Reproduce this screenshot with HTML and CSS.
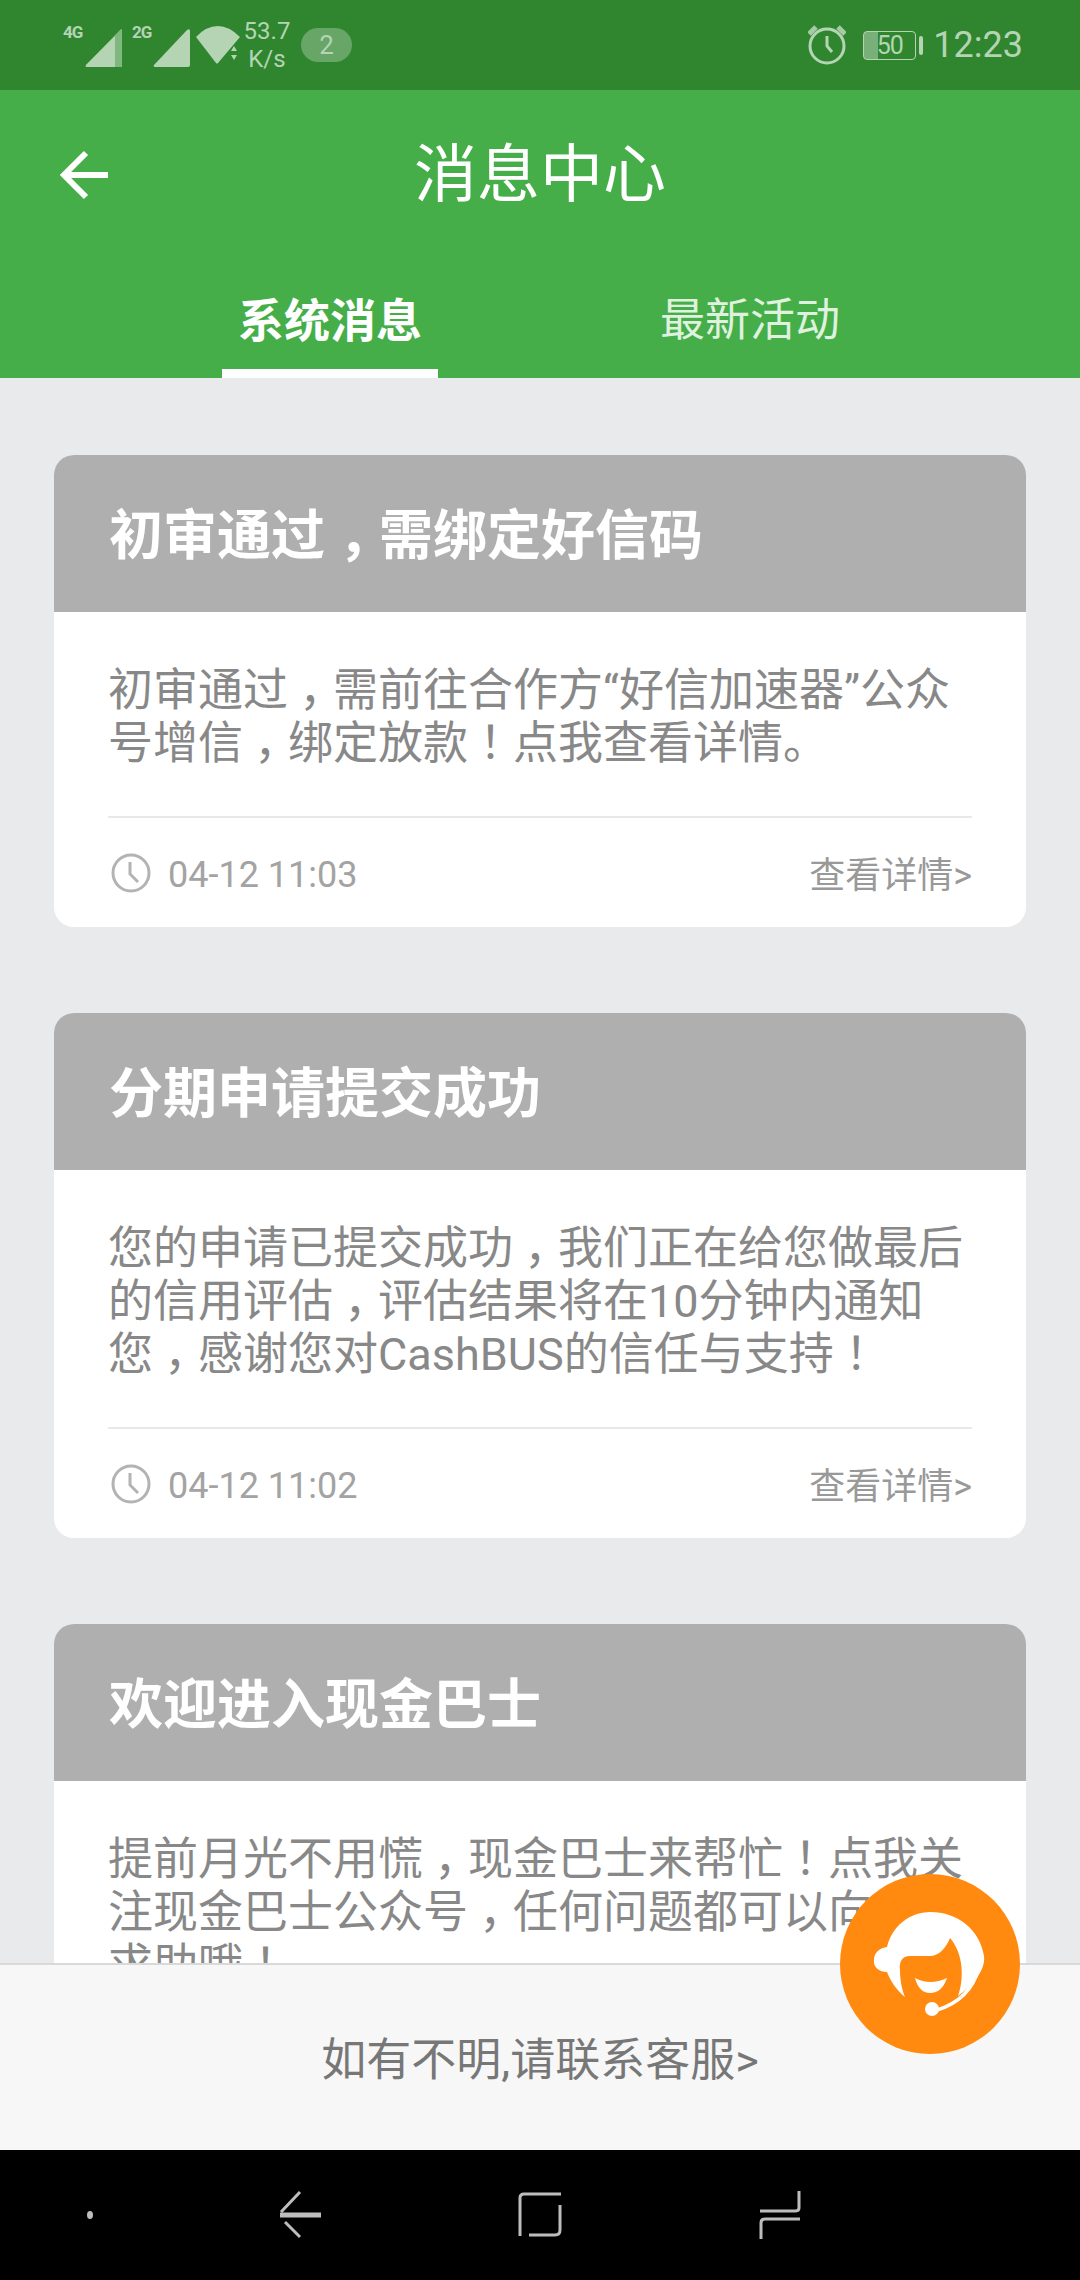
FILE: index.html
```html
<!DOCTYPE html>
<html lang="zh-CN">

<head>
  <meta charset="UTF-8">
  <meta name="viewport" content="width=device-width, initial-scale=1.0">
  <title>消息中心</title>
  <link rel="stylesheet" href="styles.css">
</head>

<body>
  <div class="page">
    <div class="status">
      <div class="status-left">
        <span class="net">4G</span>
        <svg class="signal" width="37" height="38" viewBox="0 0 37 38">
          <path d="M37 0V38H2Q0 38 1 36L35 1Q37 -1 37 0Z" fill="#7fb87f" />
          <path d="M30 7V38H2Q0 38 1 36L30 7Z" fill="#b4d4b4" />
        </svg>
        <span class="net net-two">2G</span>
        <svg class="signal signal-two" width="37" height="38" viewBox="0 0 37 38">
          <path d="M37 2V36Q37 38 35 38H2Q0 38 1 36L34 1Q37 -1 37 2Z" fill="#b4d4b4" />
        </svg>
        <svg class="wifi" width="45" height="38" viewBox="0 0 45 38">
          <path d="M1 11Q11 0 23 0Q34 0 45 11L23 37Q22 38 21 37Z" fill="#b4d4b4" />
          <path d="M36 25L39 20L42 25ZM36 29H42L39 34Z" fill="#b4d4b4" />
        </svg>
        <div class="speed">
          <span>53.7</span>
          <span>K/s</span>
        </div>
        <span class="badge">2</span>
      </div>
      <div class="status-right">
        <svg class="alarm" width="38" height="40" viewBox="0 0 38 40" fill="none" stroke="#b4d4b4">
          <circle cx="19" cy="21" r="17" stroke-width="3" />
          <path d="M19 11V21L24 27" stroke-width="3" />
          <path d="M1 9L8 2M37 9L30 2" stroke-width="5" stroke="#a5cba5" />
        </svg>
        <div class="battery"><span>50</span></div>
        <span class="battery-nub"></span>
        <span class="time">12:23</span>
      </div>
    </div>

    <div class="header">
      <div class="title-row">
        <svg class="back" width="48" height="50" viewBox="0 0 48 50" fill="none" stroke="#fff" stroke-width="6">
          <path d="M48 25H5M26 3L4 25L26 47" />
        </svg>
        <h1 class="title">消息中心</h1>
      </div>
      <div class="tabs">
        <div class="tab active">系统消息</div>
        <div class="tab">最新活动</div>
      </div>
    </div>

    <div class="list">
      <div class="card">
        <h2 class="card-title">初审通过<span class="punc">，</span>需绑定好信码</h2>
        <div class="card-body">
          <p class="card-text">初审通过<span class="punc">，</span>需前往合作方“好信加速器”公众号增信<span class="punc">，</span>绑定放款<span class="punc">！</span>点我查看详情。</p>
          <div class="card-foot">
            <div class="when">
              <svg width="42" height="42" viewBox="0 0 42 42" fill="none" stroke="#b3b3b3" stroke-width="3">
                <circle cx="21" cy="21" r="18" />
                <path d="M20 10V22L28 30" />
              </svg>
              <span class="when-text">04-12 11:03</span>
            </div>
            <span class="more">查看详情&gt;</span>
          </div>
        </div>
      </div>

      <div class="card">
        <h2 class="card-title">分期申请提交成功</h2>
        <div class="card-body">
          <p class="card-text">您的申请已提交成功<span class="punc">，</span>我们正在给您做最后的信用评估<span class="punc">，</span>评估结果将在10分钟内通知您<span class="punc">，</span>感谢您对CashBUS的信任与支持<span class="punc">！</span></p>
          <div class="card-foot">
            <div class="when">
              <svg width="42" height="42" viewBox="0 0 42 42" fill="none" stroke="#b3b3b3" stroke-width="3">
                <circle cx="21" cy="21" r="18" />
                <path d="M20 10V22L28 30" />
              </svg>
              <span class="when-text">04-12 11:02</span>
            </div>
            <span class="more">查看详情&gt;</span>
          </div>
        </div>
      </div>

      <div class="card">
        <h2 class="card-title">欢迎进入现金巴士</h2>
        <div class="card-body">
          <p class="card-text">提前月光不用慌<span class="punc">，</span>现金巴士来帮忙<span class="punc">！</span>点我关注现金巴士公众号<span class="punc">，</span>任何问题都可以向我们求助哦<span class="punc">！</span></p>
        </div>
      </div>
    </div>

    <div class="contact">如有不明,请联系客服&gt;</div>

    <div class="fab">
      <svg width="180" height="180" viewBox="0 0 180 180" fill="#fff">
        <path d="M90 38C118 38 140 56 144 82C146 96 132 112 118 122C124 106 124 80 110 64C106 74 99 82 90 82L70 82C62 82 59 88 60 96C60 106 62 116 65 123C56 116 50 106 47 98C38 98 33 92 34 86C34 78 40 74 47 73C52 52 70 38 90 38Z" />
        <path d="M75 104Q90 112 107 104Q102 119 90 119Q79 119 75 104Z" />
        <path d="M139 94Q130 126 97 136" fill="none" stroke="#fff" stroke-width="3.5" />
        <circle cx="92" cy="135" r="7" />
      </svg>
    </div>

    <div class="nav">
      <span class="nav-dot"></span>
      <svg width="42" height="48" viewBox="0 0 42 48" fill="none" stroke="#bdbdbd">
        <path d="M21 1L2 21" stroke-width="3" />
        <path d="M1 24H42" stroke-width="5" />
        <path d="M6 31L21 46" stroke-width="3" />
      </svg>
      <svg width="44" height="46" viewBox="0 0 44 46" fill="none" stroke="#bdbdbd">
        <path d="M2 44V6Q2 2 6 2H43" stroke-width="3" />
        <path d="M42 13V38Q42 43 37 43H11" stroke-width="3" />
      </svg>
      <svg width="42" height="50" viewBox="0 0 42 50" fill="none" stroke="#bdbdbd">
        <path d="M40 1V18Q40 21 36 21H1" stroke-width="3" />
        <path d="M2 49V33Q2 29 6 29H41" stroke-width="3" />
      </svg>
    </div>
  </div>
</body>

</html>
```

FILE: styles.css
```css
* {
  margin: 0;
  padding: 0;
  box-sizing: border-box;
}

body {
  font-family: Roboto, "Noto Sans CJK SC", sans-serif;
}

.page {
  position: relative;
  width: 1080px;
  height: 2280px;
  display: flex;
  flex-direction: column;
  overflow: hidden;
  background-color: #e9eaec;
}

/* 状态栏 */
.status {
  height: 90px;
  flex-shrink: 0;
  padding: 0 57px 0 63px;
  display: flex;
  justify-content: space-between;
  align-items: center;
  background-color: #2f862f;
  color: #b4d4b4;
}

.status-left,
.status-right {
  display: flex;
  align-items: center;
}

.net {
  width: 19px;
  margin-top: -26px;
  font-size: 17px;
  font-weight: 700;
  letter-spacing: -1px;
}

.signal {
  margin: 6px 10px 0 3px;
}

.net-two {
  margin-right: -1px;
}

.signal-two {
  margin-right: 5px;
}

.speed {
  width: 44px;
  margin: 0 12px 0 5px;
  display: flex;
  flex-direction: column;
  align-items: center;
  font-size: 24px;
  line-height: 28px;
  white-space: nowrap;
}

.badge {
  width: 51px;
  height: 34px;
  border-radius: 17px;
  background-color: #67a667;
  text-align: center;
  font-size: 26px;
  line-height: 34px;
}

.alarm {
  margin-right: 17px;
}

.battery {
  width: 53px;
  height: 29px;
  border: 1px solid #b4d4b4;
  border-radius: 4px;
  background: linear-gradient(90deg, #79b079 14px, transparent 14px);
  text-align: center;
  font-size: 25px;
  line-height: 27px;
  letter-spacing: -1px;
}

.battery-nub {
  width: 4px;
  height: 19px;
  margin: 0 10px 0 3px;
  border-radius: 2px;
  background-color: #b4d4b4;
}

.time {
  font-size: 36px;
}

/* 顶部绿色区域 */
.header {
  height: 288px;
  flex-shrink: 0;
  background-color: #46ae49;
  color: #fff;
}

.title-row {
  position: relative;
  height: 170px;
  display: flex;
  justify-content: center;
  align-items: center;
}

.back {
  position: absolute;
  left: 60px;
  top: 60px;
}

.title {
  font-size: 63px;
  font-weight: 400;
  line-height: 172px;
}

.tabs {
  height: 118px;
  padding-left: 222px;
  display: flex;
  gap: 204px;
}

.tab {
  width: 216px;
  height: 118px;
  text-align: center;
  font-size: 45px;
  line-height: 122px;
  color: #dff1df;
}

.tab.active {
  border-bottom: 9px solid #fff;
  color: #fff;
  font-size: 46px;
  font-weight: 700;
}

/* 消息列表 */
.list {
  flex: 1;
  min-height: 0;
  overflow: hidden;
  padding: 77px 54px 0;
}

.card {
  margin-bottom: 86px;
  border-radius: 20px;
  overflow: hidden;
  background-color: #fff;
}

.card-title {
  height: 157px;
  padding-left: 55px;
  background-color: #afafaf;
  color: #fff;
  font-size: 54px;
  font-weight: 700;
  line-height: 163px;
}

.card-body {
  padding: 52px 54px 0;
}

.card-text {
  padding-bottom: 46px;
  border-bottom: 2px solid #e8e8e8;
  color: #888;
  font-size: 45px;
  line-height: 53px;
}

/* 标点居中，和原图一致 */
.punc {
  position: relative;
  left: .25em;
}

.card-foot {
  height: 109px;
  display: flex;
  justify-content: space-between;
  align-items: center;
  color: #a3a3a3;
  font-size: 36px;
}

.when {
  margin-left: 2px;
  display: flex;
  align-items: center;
  gap: 16px;
}

.when-text {
  margin-top: 5px;
}

.more {
  margin-top: -2px;
  color: #999;
}

/* 底部 */
.contact {
  height: 187px;
  flex-shrink: 0;
  border-top: 2px solid #d9d9d9;
  background-color: #f7f7f7;
  text-align: center;
  color: #777;
  font-size: 45px;
  line-height: 192px;
}

.fab {
  position: absolute;
  left: 840px;
  top: 1874px;
  width: 180px;
  height: 180px;
  border-radius: 50%;
  background-color: #ff8a0f;
}

.nav {
  height: 130px;
  flex-shrink: 0;
  display: grid;
  grid-template-columns: 180px 240px 240px 240px;
  justify-items: center;
  align-items: center;
  background-color: #000;
}

.nav-dot {
  width: 6px;
  height: 8px;
  border-radius: 50%;
  background-color: #bdbdbd;
}
```
